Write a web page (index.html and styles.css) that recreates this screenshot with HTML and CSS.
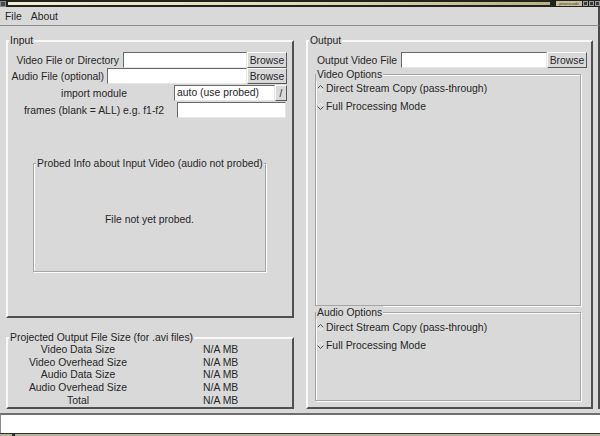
FILE: index.html
```html
<!DOCTYPE html>
<html>
<head>
<meta charset="utf-8">
<title>ptranscode</title>
<link rel="stylesheet" href="styles.css">
</head>
<body>
<div class="titlebar">
  <span class="ticon"></span>
  <div class="tstripe"></div>
  <span class="ttitle">ptranscode</span>
  <span class="tbtn"></span><span class="tbtn"></span><span class="tbtn"></span>
</div>
<div class="menubar"><span>File</span><span>About</span></div>
<div class="main">
  <div class="leftcol">
    <div class="frame input">
      <span class="legend">Input</span>
      <div class="filerow r1"><span class="lbl-r">Video File or Directory</span><div class="entry"></div><div class="btn">Browse</div></div>
      <div class="filerow r2"><span class="lbl-r">Audio File (optional)</span><div class="entry"></div><div class="btn">Browse</div></div>
      <div class="filerow r3"><span class="lbl-c">import module</span><div class="entry combo">auto (use probed)</div><div class="btn slash">/</div></div>
      <div class="filerow r4"><span class="lbl-c">frames (blank = ALL) e.g. f1-f2</span><div class="entry"></div></div>
      <div class="groove probed">
        <span class="legend gl">Probed Info about Input Video (audio not probed)</span>
        <div class="probedtext">File not yet probed.</div>
      </div>
    </div>
    <div class="frame projected">
      <span class="legend">Projected Output File Size (for .avi files)</span>
      <div class="sizes">
        <span class="sname">Video Data Size</span><span class="sval">N/A MB</span>
        <span class="sname">Video Overhead Size</span><span class="sval">N/A MB</span>
        <span class="sname">Audio Data Size</span><span class="sval">N/A MB</span>
        <span class="sname">Audio Overhead Size</span><span class="sval">N/A MB</span>
        <span class="sname">Total</span><span class="sval">N/A MB</span>
      </div>
    </div>
  </div>
  <div class="frame output">
    <span class="legend">Output</span>
    <div class="filerow r5"><span class="lbl-r">Output Video File</span><div class="entry"></div><div class="btn">Browse</div></div>
    <div class="groove options video">
      <span class="legend gl2">Video Options</span>
      <div class="radio"><svg class="dia" width="7" height="7" viewBox="0 0 7 7"><path d="M0.5 3.5 L3.5 0.5 L6.5 3.5" stroke="#4a4a4a" fill="none"/><path d="M0.5 3.5 L3.5 6.5 L6.5 3.5" stroke="#f2f2f2" fill="none"/></svg><span>Direct Stream Copy (pass-through)</span></div>
      <div class="radio"><svg class="dia" width="7" height="7" viewBox="0 0 7 7"><path d="M0.5 3.5 L3.5 0.5 L6.5 3.5" stroke="#f2f2f2" fill="none"/><path d="M0.5 3.5 L3.5 6.5 L6.5 3.5" stroke="#4a4a4a" fill="none"/></svg><span>Full Processing Mode</span></div>
    </div>
    <div class="groove options audio">
      <span class="legend gl2">Audio Options</span>
      <div class="radio"><svg class="dia" width="7" height="7" viewBox="0 0 7 7"><path d="M0.5 3.5 L3.5 0.5 L6.5 3.5" stroke="#4a4a4a" fill="none"/><path d="M0.5 3.5 L3.5 6.5 L6.5 3.5" stroke="#f2f2f2" fill="none"/></svg><span>Direct Stream Copy (pass-through)</span></div>
      <div class="radio"><svg class="dia" width="7" height="7" viewBox="0 0 7 7"><path d="M0.5 3.5 L3.5 0.5 L6.5 3.5" stroke="#f2f2f2" fill="none"/><path d="M0.5 3.5 L3.5 6.5 L6.5 3.5" stroke="#4a4a4a" fill="none"/></svg><span>Full Processing Mode</span></div>
    </div>
  </div>
</div>
<div class="status"></div>
<div class="taskbar"><span class="tbicon"></span></div>
</body>
</html>
```
FILE: styles.css
```css
* { box-sizing: border-box; margin: 0; padding: 0; }
html, body { width: 600px; height: 436px; overflow: hidden; }
body {
  background: #d9d9d9;
  font-family: "Liberation Sans", Arial, sans-serif;
  font-size: 10.4px;
  line-height: 13px;
  color: #272727;
}

/* window title bar */
.titlebar { height: 7px; background: #23231d; display: flex; align-items: center; }
.ticon { width: 6px; height: 6px; background: #4a4a4a; border: 1px solid #8a8a8a; margin-right: 2px; }
.tstripe { flex: 1; height: 3px; background: linear-gradient(90deg, #f1ecd4, #ddd7b6 60%, #b8b084); }
.ttitle { height: 5px; font-size: 4px; line-height: 5px; color: #333; background: #c6bf98; padding: 0 3px; margin-left: 6px; }
.tbtn { width: 5px; height: 5px; background: #3c3c3c; border: 1px solid #9a9a9a; margin-left: 1px; }

/* menu bar */
.menubar { height: 19px; display: flex; align-items: center; padding-left: 5px; gap: 9px; border-bottom: 1px solid #8c8c8c; border-right: 2px solid #4a4a4a; }

/* main layout */
.main { height: 383px; display: grid; grid-template-columns: 288px 287px; column-gap: 12px; padding: 14px 0 0 6px; border-right: 2px solid #4a4a4a; }
.leftcol { display: flex; flex-direction: column; gap: 19px; }

.frame { position: relative; border: 2px solid; border-color: #f8f8f8 #505050 #505050 #f8f8f8; }
.legend { position: absolute; top: -8px; left: 1px; padding: 0 1px; background: #d9d9d9; line-height: 13px; white-space: nowrap; }

.input { height: 278px; padding: 10px 5px 0 0; }
.projected { height: 72px; }
.output { height: 369px; padding: 10px 4px 0 0; }

/* rows */
.filerow { display: grid; height: 16px; align-items: center; }
.r1 { grid-template-columns: 1fr 124px 40px; }
.r2 { grid-template-columns: 1fr 140px 40px; }
.r3 { grid-template-columns: 160px 101px 12px; padding-left: 6px; margin-top: 1px; }
.r4 { grid-template-columns: 160px 109px; padding-left: 6px; margin-top: 1px; column-gap: 3px; }
.r5 { grid-template-columns: 1fr 146px 40px; }
.lbl-r { text-align: right; padding-right: 4px; white-space: nowrap; }
.r2 .lbl-r { padding-right: 3px; }
.lbl-c { text-align: center; white-space: nowrap; }

.entry { height: 16px; background: #fff; border: 1px solid; border-color: #6a6a6a #e6e6e6 #e6e6e6 #6a6a6a; }
.combo { padding-left: 2px; line-height: 14px; }
.btn { height: 16px; border: 1px solid; border-color: #fafafa #585858 #585858 #fafafa; display: flex; align-items: center; justify-content: center; }
.slash { font-size: 10px; }

/* etched frames */
.groove { position: relative; border: 1px solid #a6a6a6; box-shadow: inset 1px 1px 0 #fbfbfb, 1px 1px 0 #fbfbfb; }
.groove .legend { top: -7px; }
.gl { left: 2px; }
.gl2 { left: 0; }

.probed { margin: 45px 0 0 25px; width: 233px; height: 109px; display: flex; align-items: center; justify-content: center; }
.probedtext { padding-top: 4px; }

/* projected sizes */
.sizes { display: grid; grid-template-columns: 140px 1fr; grid-auto-rows: 12.7px; padding-top: 5px; line-height: 12.7px; }
.sname { text-align: center; }
.sval { padding-left: 55px; }

/* options */
.options { margin: 6px 6px 0 7px; padding-top: 4px; }
.video { height: 232px; }
.audio { height: 89px; padding-top: 5px; }
.radio { display: flex; align-items: center; height: 18px; gap: 2px; padding-left: 1px; }
.dia { flex: none; }

/* status + taskbar */
.status { margin-top: 4px; height: 20px; background: #fff; border-top: 2px solid #6e6e6e; border-left: 1px solid #8a8a8a; }
.taskbar { height: 3px; background: #b9b396; border-top: 1px solid #2e2e2e; position: relative; }
.tbicon { position: absolute; left: 12px; top: -1px; width: 3px; height: 3px; background: #2e2e2e; }
```
